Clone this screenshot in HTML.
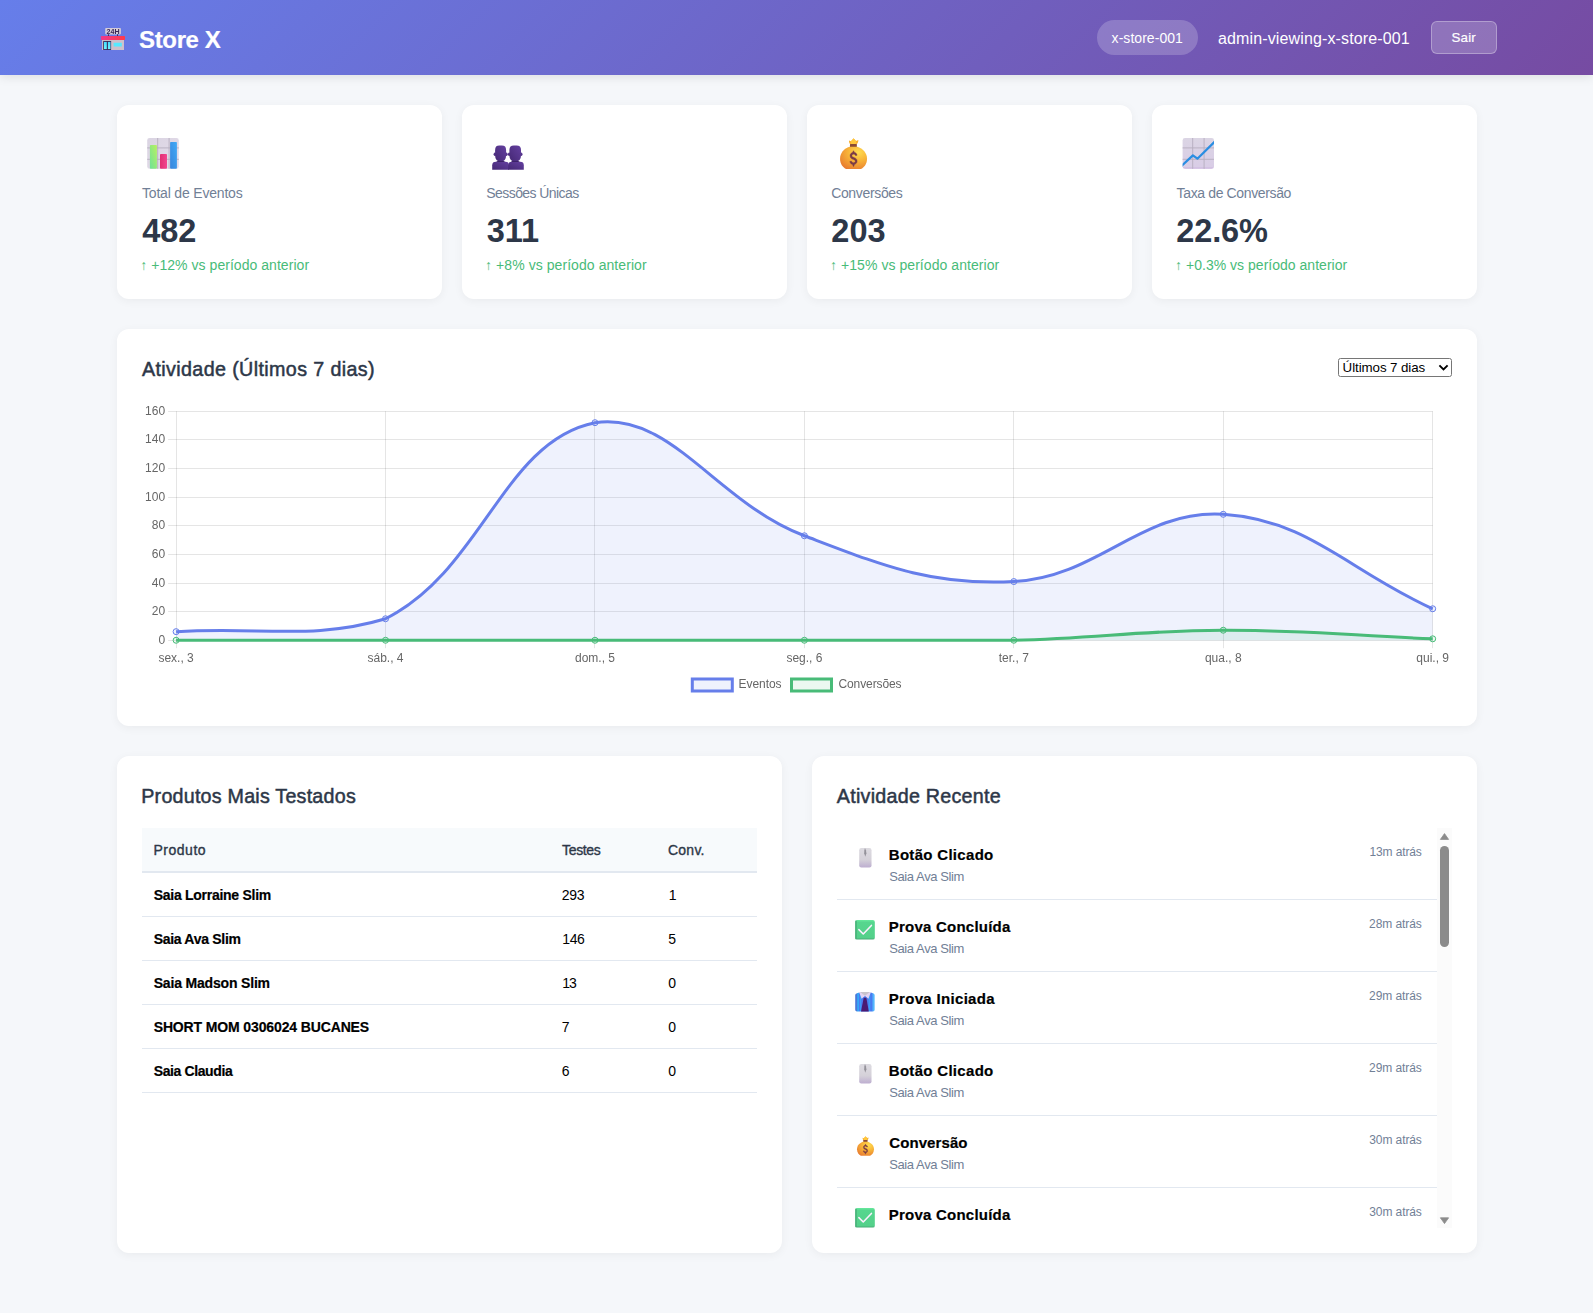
<!DOCTYPE html>
<html lang="pt-BR"><head><meta charset="utf-8"><title>Store X</title>
<style>
*{box-sizing:border-box;margin:0;padding:0}
html,body{width:1593px;height:1313px;overflow:hidden}
body{font-family:"Liberation Sans",sans-serif;background:#f5f7fa;color:#2d3748;position:relative}
.abs{position:absolute;white-space:nowrap;line-height:1}
.hdr{position:absolute;left:0;top:0;width:1593px;height:75px;background:linear-gradient(135deg,#667eea 0%,#764ba2 100%);box-shadow:0 2px 10px rgba(0,0,0,0.1)}
.pill{position:absolute;left:1097px;top:20px;width:101px;height:35px;border-radius:18px;background:rgba(255,255,255,0.2)}
.btn{position:absolute;left:1431px;top:21px;width:66px;height:33px;border-radius:6px;background:rgba(255,255,255,0.2);border:1px solid rgba(255,255,255,0.3)}
.card{position:absolute;background:#fff;border-radius:12px;box-shadow:0 2px 10px rgba(0,0,0,0.05)}
.stat{top:105px;width:325px;height:194px}
.sel{position:absolute;left:1338px;top:358px;width:114px;height:19px;border:1px solid #767676;border-radius:2.5px;background:#fff;color:#000;font-size:13.33px;line-height:17px;padding-left:3.6px;letter-spacing:-0.08px;white-space:nowrap}
.thbg{position:absolute;left:142px;top:828px;width:615px;height:45px;background:#f7fafc;border-bottom:2px solid #e2e8f0}
.rb{position:absolute;left:142px;width:615px;height:1px;background:#e2e8f0}
.ib{position:absolute;left:837px;width:600px;height:1px;background:#e2e8f0}
.sbt{position:absolute;left:1437px;top:828px;width:15px;height:400px;background:#fbfbfb}
.sbh{position:absolute;left:1440px;top:846px;width:9px;height:101px;border-radius:5px;background:#8b8b8b}

</style></head>
<body>
<div class="hdr">
  <div class="pill"></div>
  <div class="btn"></div>
</div>

<div class="card stat" style="left:117px"></div>
<div class="card stat" style="left:462px"></div>
<div class="card stat" style="left:807px"></div>
<div class="card stat" style="left:1152px"></div>

<div class="card" style="left:117px;top:329px;width:1360px;height:397px"></div>
<div class="sel">Últimos 7 dias<svg style="position:absolute;left:98.5px;top:5px" width="11" height="8" viewBox="0 0 11 8"><path d="M1.4 1.4 L5.5 5.4 L9.6 1.4" fill="none" stroke="#000" stroke-width="1.9"/></svg></div>
<svg class="chartsvg" width="1310" height="300" viewBox="142 400 1310 300" style="position:absolute;left:142px;top:400px;font-family:'Liberation Sans',sans-serif;will-change:transform">
<g stroke="#000" stroke-opacity="0.1" stroke-width="1" fill="none"><path d="M168.1 640.5H1432.7"/><path d="M168.1 611.5H1432.7"/><path d="M168.1 583.5H1432.7"/><path d="M168.1 554.5H1432.7"/><path d="M168.1 525.5H1432.7"/><path d="M168.1 497.5H1432.7"/><path d="M168.1 468.5H1432.7"/><path d="M168.1 439.5H1432.7"/><path d="M168.1 411.5H1432.7"/><path d="M176.5 411.2V648.2"/><path d="M385.5 411.2V648.2"/><path d="M594.5 411.2V648.2"/><path d="M804.5 411.2V648.2"/><path d="M1013.5 411.2V648.2"/><path d="M1223.5 411.2V648.2"/><path d="M1432.5 411.2V648.2"/></g>
<g fill="#666" font-size="12"><text x="165.1" y="643.8" text-anchor="end">0</text><text x="165.1" y="615.1" text-anchor="end">20</text><text x="165.1" y="586.5" text-anchor="end">40</text><text x="165.1" y="557.9" text-anchor="end">60</text><text x="165.1" y="529.2" text-anchor="end">80</text><text x="165.1" y="500.6" text-anchor="end">100</text><text x="165.1" y="472.0" text-anchor="end">120</text><text x="165.1" y="443.4" text-anchor="end">140</text><text x="165.1" y="414.8" text-anchor="end">160</text><text x="176.1" y="662.0" text-anchor="middle">sex., 3</text><text x="385.5" y="662.0" text-anchor="middle">sáb., 4</text><text x="595.0" y="662.0" text-anchor="middle">dom., 5</text><text x="804.4" y="662.0" text-anchor="middle">seg., 6</text><text x="1013.8" y="662.0" text-anchor="middle">ter., 7</text><text x="1223.3" y="662.0" text-anchor="middle">qua., 8</text><text x="1432.7" y="662.0" text-anchor="middle">qui., 9</text></g>
<path d="M176.10 631.66 C259.87 626.51 314.76 640.25 385.53 618.78 C482.30 570.50 503.39 440.85 594.97 422.70 C670.94 411.25 716.25 502.34 804.40 535.77 C883.80 565.88 931.14 585.81 1013.83 581.57 C1098.68 577.22 1141.32 508.98 1223.27 514.30 C1308.86 519.86 1348.93 570.98 1432.70 608.76 L1432.70 640.25 L176.10 640.25 Z" fill="rgba(102,126,234,0.1)"/>
<path d="M176.10 631.66 C259.87 626.51 314.76 640.25 385.53 618.78 C482.30 570.50 503.39 440.85 594.97 422.70 C670.94 411.25 716.25 502.34 804.40 535.77 C883.80 565.88 931.14 585.81 1013.83 581.57 C1098.68 577.22 1141.32 508.98 1223.27 514.30 C1308.86 519.86 1348.93 570.98 1432.70 608.76" fill="none" stroke="#667eea" stroke-width="3" stroke-linecap="butt" stroke-linejoin="miter"/>
<circle cx="176.10" cy="631.66" r="3" fill="rgba(102,126,234,0.1)" stroke="#667eea" stroke-width="1"/>
<circle cx="385.53" cy="618.78" r="3" fill="rgba(102,126,234,0.1)" stroke="#667eea" stroke-width="1"/>
<circle cx="594.97" cy="422.70" r="3" fill="rgba(102,126,234,0.1)" stroke="#667eea" stroke-width="1"/>
<circle cx="804.40" cy="535.77" r="3" fill="rgba(102,126,234,0.1)" stroke="#667eea" stroke-width="1"/>
<circle cx="1013.83" cy="581.57" r="3" fill="rgba(102,126,234,0.1)" stroke="#667eea" stroke-width="1"/>
<circle cx="1223.27" cy="514.30" r="3" fill="rgba(102,126,234,0.1)" stroke="#667eea" stroke-width="1"/>
<circle cx="1432.70" cy="608.76" r="3" fill="rgba(102,126,234,0.1)" stroke="#667eea" stroke-width="1"/>
<path d="M176.10 640.25 C259.87 640.25 301.76 640.25 385.53 640.25 C469.31 640.25 511.19 640.25 594.97 640.25 C678.74 640.25 720.63 640.25 804.40 640.25 C888.17 640.25 930.11 640.25 1013.83 640.25 C1097.65 638.25 1139.48 630.52 1223.27 630.23 C1307.03 629.95 1348.93 635.38 1432.70 638.82 L1432.70 640.25 L176.10 640.25 Z" fill="rgba(72,187,120,0.1)"/>
<path d="M176.10 640.25 C259.87 640.25 301.76 640.25 385.53 640.25 C469.31 640.25 511.19 640.25 594.97 640.25 C678.74 640.25 720.63 640.25 804.40 640.25 C888.17 640.25 930.11 640.25 1013.83 640.25 C1097.65 638.25 1139.48 630.52 1223.27 630.23 C1307.03 629.95 1348.93 635.38 1432.70 638.82" fill="none" stroke="#48bb78" stroke-width="3" stroke-linecap="butt" stroke-linejoin="miter"/>
<circle cx="176.10" cy="640.25" r="3" fill="rgba(72,187,120,0.1)" stroke="#48bb78" stroke-width="1"/>
<circle cx="385.53" cy="640.25" r="3" fill="rgba(72,187,120,0.1)" stroke="#48bb78" stroke-width="1"/>
<circle cx="594.97" cy="640.25" r="3" fill="rgba(72,187,120,0.1)" stroke="#48bb78" stroke-width="1"/>
<circle cx="804.40" cy="640.25" r="3" fill="rgba(72,187,120,0.1)" stroke="#48bb78" stroke-width="1"/>
<circle cx="1013.83" cy="640.25" r="3" fill="rgba(72,187,120,0.1)" stroke="#48bb78" stroke-width="1"/>
<circle cx="1223.27" cy="630.23" r="3" fill="rgba(72,187,120,0.1)" stroke="#48bb78" stroke-width="1"/>
<circle cx="1432.70" cy="638.82" r="3" fill="rgba(72,187,120,0.1)" stroke="#48bb78" stroke-width="1"/>
<rect x="692.3" y="679" width="40" height="12" fill="rgba(102,126,234,0.1)" stroke="#667eea" stroke-width="3"/>
<text x="738.6" y="688" fill="#666" font-size="12" textLength="42.9" lengthAdjust="spacing">Eventos</text>
<rect x="791.5" y="679" width="40" height="12" fill="rgba(72,187,120,0.1)" stroke="#48bb78" stroke-width="3"/>
<text x="838.4" y="688" fill="#666" font-size="12" textLength="63.2" lengthAdjust="spacing">Conversões</text>
</svg>

<div class="card" style="left:117px;top:756px;width:665px;height:497px"></div>
<div class="thbg"></div>
<div class="rb" style="top:916px"></div><div class="rb" style="top:960px"></div><div class="rb" style="top:1004px"></div><div class="rb" style="top:1048px"></div><div class="rb" style="top:1092px"></div>

<div class="card" style="left:812px;top:756px;width:665px;height:497px"></div>
<div class="ib" style="top:899px"></div><div class="ib" style="top:971px"></div><div class="ib" style="top:1043px"></div><div class="ib" style="top:1115px"></div><div class="ib" style="top:1187px"></div>
<div class="sbt"></div>
<div class="sbh"></div>
<svg style="position:absolute;left:1437px;top:828px" width="15" height="400" viewBox="0 0 15 400"><path d="M3.4 11.4 L7.5 5.6 L11.6 11.4 Z" fill="#8b8b8b" stroke="#8b8b8b" stroke-width="0.8" stroke-linejoin="round"/><path d="M3.4 389.8 L7.5 395.6 L11.6 389.8 Z" fill="#8b8b8b" stroke="#8b8b8b" stroke-width="0.8" stroke-linejoin="round"/></svg>
<div class="abs logo" style="left:139.12px;top:28.01px;font-size:24px;color:#fff;letter-spacing:-0.378px;font-weight:bold;-webkit-text-stroke:0.2px #fff;">Store X</div>
<div class="abs pillt" style="left:1111.60px;top:31.01px;font-size:14px;color:#fff;letter-spacing:0.046px;">x-store-001</div>
<div class="abs user" style="left:1218.00px;top:31.00px;font-size:16px;color:#fff;letter-spacing:0.131px;">admin-viewing-x-store-001</div>
<div class="abs btnt" style="left:1451.58px;top:31.00px;font-size:13.33px;color:#fff;letter-spacing:0.126px;-webkit-text-stroke:0.2px #fff;">Sair</div>
<div class="abs lbl" style="left:141.98px;top:186.01px;font-size:14px;color:#718096;letter-spacing:-0.184px;">Total de Eventos</div>
<div class="abs lbl" style="left:486.36px;top:186.01px;font-size:14px;color:#718096;letter-spacing:-0.585px;">Sessões Únicas</div>
<div class="abs lbl" style="left:831.14px;top:186.01px;font-size:14px;color:#718096;letter-spacing:-0.334px;">Conversões</div>
<div class="abs lbl" style="left:1176.58px;top:186.01px;font-size:14px;color:#718096;letter-spacing:-0.365px;">Taxa de Conversão</div>
<div class="abs val" style="left:142.30px;top:215.01px;font-size:32.5px;color:#2d3748;letter-spacing:-0.158px;font-weight:bold;">482</div>
<div class="abs val" style="left:486.79px;top:215.01px;font-size:32.5px;color:#2d3748;letter-spacing:-0.057px;font-weight:bold;">311</div>
<div class="abs val" style="left:831.28px;top:215.01px;font-size:32.5px;color:#2d3748;letter-spacing:0.050px;font-weight:bold;">203</div>
<div class="abs val" style="left:1176.28px;top:215.01px;font-size:32.5px;color:#2d3748;letter-spacing:-0.119px;font-weight:bold;">22.6%</div>
<div class="abs chg" style="left:140.25px;top:258.01px;font-size:14px;color:#48bb78;letter-spacing:0.044px;">↑ +12% vs período anterior</div>
<div class="abs chg" style="left:485.05px;top:258.01px;font-size:14px;color:#48bb78;letter-spacing:0.067px;">↑ +8% vs período anterior</div>
<div class="abs chg" style="left:830.05px;top:258.01px;font-size:14px;color:#48bb78;letter-spacing:0.056px;">↑ +15% vs período anterior</div>
<div class="abs chg" style="left:1175.05px;top:258.01px;font-size:14px;color:#48bb78;letter-spacing:0.020px;">↑ +0.3% vs período anterior</div>
<div class="abs h3" style="left:141.90px;top:360.01px;font-size:19.7px;color:#2d3748;letter-spacing:0.379px;-webkit-text-stroke:0.49px #2d3748;">Atividade (Últimos 7 dias)</div>
<div class="abs h3" style="left:141.26px;top:787.01px;font-size:19.7px;color:#2d3748;letter-spacing:0.225px;-webkit-text-stroke:0.49px #2d3748;">Produtos Mais Testados</div>
<div class="abs h3" style="left:836.80px;top:787.01px;font-size:19.7px;color:#2d3748;letter-spacing:0.257px;-webkit-text-stroke:0.49px #2d3748;">Atividade Recente</div>
<div class="abs th" style="left:153.51px;top:843.01px;font-size:14px;color:#2d3748;letter-spacing:0.504px;-webkit-text-stroke:0.35px #2d3748;">Produto</div>
<div class="abs th" style="left:562.08px;top:843.01px;font-size:14px;color:#2d3748;letter-spacing:-0.361px;-webkit-text-stroke:0.35px #2d3748;">Testes</div>
<div class="abs th" style="left:668.04px;top:843.01px;font-size:14px;color:#2d3748;letter-spacing:0.222px;-webkit-text-stroke:0.35px #2d3748;">Conv.</div>
<div class="abs tdb" style="left:153.68px;top:888.00px;font-size:14px;color:#000;letter-spacing:-0.270px;font-weight:bold;-webkit-text-stroke:0.2px #000;">Saia Lorraine Slim</div>
<div class="abs td" style="left:561.74px;top:888.00px;font-size:14px;color:#000;letter-spacing:-0.267px;">293</div>
<div class="abs td" style="left:668.73px;top:888.00px;font-size:14px;color:#000;">1</div>
<div class="abs tdb" style="left:153.68px;top:932.00px;font-size:14px;color:#000;letter-spacing:-0.295px;font-weight:bold;-webkit-text-stroke:0.2px #000;">Saia Ava Slim</div>
<div class="abs td" style="left:562.33px;top:932.00px;font-size:14px;color:#000;letter-spacing:-0.458px;">146</div>
<div class="abs td" style="left:668.16px;top:932.00px;font-size:14px;color:#000;">5</div>
<div class="abs tdb" style="left:153.68px;top:976.00px;font-size:14px;color:#000;letter-spacing:-0.177px;font-weight:bold;-webkit-text-stroke:0.2px #000;">Saia Madson Slim</div>
<div class="abs td" style="left:562.33px;top:976.00px;font-size:14px;color:#000;letter-spacing:-1.030px;">13</div>
<div class="abs td" style="left:668.16px;top:976.00px;font-size:14px;color:#000;">0</div>
<div class="abs tdb" style="left:153.68px;top:1020.01px;font-size:14px;color:#000;letter-spacing:-0.130px;font-weight:bold;-webkit-text-stroke:0.2px #000;">SHORT MOM 0306024 BUCANES</div>
<div class="abs td" style="left:561.74px;top:1020.01px;font-size:14px;color:#000;">7</div>
<div class="abs td" style="left:668.16px;top:1020.01px;font-size:14px;color:#000;">0</div>
<div class="abs tdb" style="left:153.68px;top:1064.01px;font-size:14px;color:#000;letter-spacing:-0.384px;font-weight:bold;-webkit-text-stroke:0.2px #000;">Saia Claudia</div>
<div class="abs td" style="left:561.74px;top:1064.01px;font-size:14px;color:#000;">6</div>
<div class="abs td" style="left:668.16px;top:1064.01px;font-size:14px;color:#000;">0</div>
<div class="abs tt" style="left:888.76px;top:847.00px;font-size:15px;color:#000;letter-spacing:0.307px;font-weight:bold;-webkit-text-stroke:0.2px #000;">Botão Clicado</div>
<div class="abs st" style="left:889.19px;top:870.00px;font-size:13px;color:#718096;letter-spacing:-0.400px;">Saia Ava Slim</div>
<div class="abs tm" style="left:1369.45px;top:846.02px;font-size:12px;color:#718096;letter-spacing:-0.116px;">13m atrás</div>
<div class="abs tt" style="left:888.76px;top:919.00px;font-size:15px;color:#000;letter-spacing:0.227px;font-weight:bold;-webkit-text-stroke:0.2px #000;">Prova Concluída</div>
<div class="abs st" style="left:889.19px;top:942.00px;font-size:13px;color:#718096;letter-spacing:-0.400px;">Saia Ava Slim</div>
<div class="abs tm" style="left:1369.04px;top:918.02px;font-size:12px;color:#718096;letter-spacing:-0.065px;">28m atrás</div>
<div class="abs tt" style="left:888.76px;top:991.00px;font-size:15px;color:#000;letter-spacing:0.318px;font-weight:bold;-webkit-text-stroke:0.2px #000;">Prova Iniciada</div>
<div class="abs st" style="left:889.19px;top:1014.00px;font-size:13px;color:#718096;letter-spacing:-0.400px;">Saia Ava Slim</div>
<div class="abs tm" style="left:1369.04px;top:990.02px;font-size:12px;color:#718096;letter-spacing:-0.065px;">29m atrás</div>
<div class="abs tt" style="left:888.76px;top:1063.00px;font-size:15px;color:#000;letter-spacing:0.307px;font-weight:bold;-webkit-text-stroke:0.2px #000;">Botão Clicado</div>
<div class="abs st" style="left:889.19px;top:1086.00px;font-size:13px;color:#718096;letter-spacing:-0.400px;">Saia Ava Slim</div>
<div class="abs tm" style="left:1369.04px;top:1062.02px;font-size:12px;color:#718096;letter-spacing:-0.065px;">29m atrás</div>
<div class="abs tt" style="left:889.23px;top:1135.00px;font-size:15px;color:#000;letter-spacing:0.092px;font-weight:bold;-webkit-text-stroke:0.2px #000;">Conversão</div>
<div class="abs st" style="left:889.19px;top:1158.00px;font-size:13px;color:#718096;letter-spacing:-0.400px;">Saia Ava Slim</div>
<div class="abs tm" style="left:1369.22px;top:1134.02px;font-size:12px;color:#718096;letter-spacing:-0.088px;">30m atrás</div>
<div class="abs tt" style="left:888.76px;top:1207.00px;font-size:15px;color:#000;letter-spacing:0.227px;font-weight:bold;-webkit-text-stroke:0.2px #000;">Prova Concluída</div>
<div class="abs tm" style="left:1369.22px;top:1206.02px;font-size:12px;color:#718096;letter-spacing:-0.088px;">30m atrás</div>
<svg width="0" height="0" style="position:absolute">
  <defs>
    <linearGradient id="gRoof" x1="0" x2="1" y1="0" y2="0"><stop offset="0" stop-color="#f0388c"/><stop offset="1" stop-color="#ff3a48"/></linearGradient>
    <linearGradient id="gCy" x1="0" x2="0" y1="0" y2="1"><stop offset="0" stop-color="#45dcff"/><stop offset="1" stop-color="#6df6ff"/></linearGradient>
    <linearGradient id="gGreen" x1="0" x2="1" y1="1" y2="0"><stop offset="0" stop-color="#6ee298"/><stop offset="1" stop-color="#b8f060"/></linearGradient>
    <linearGradient id="gPink" x1="0" x2="1" y1="0" y2="0"><stop offset="0" stop-color="#e02f72"/><stop offset="1" stop-color="#f24690"/></linearGradient>
    <linearGradient id="gBlue" x1="0" x2="1" y1="1" y2="0"><stop offset="0" stop-color="#3a84dc"/><stop offset="1" stop-color="#40aaf6"/></linearGradient>
    <linearGradient id="gPanel" x1="0" x2="1" y1="0" y2="1"><stop offset="0" stop-color="#dad4e2"/><stop offset="1" stop-color="#e4dcea"/></linearGradient>
    <linearGradient id="gPanel2" x1="0" x2="0" y1="0" y2="1"><stop offset="0" stop-color="#dbd5e4"/><stop offset="0.93" stop-color="#d9cde6"/><stop offset="1" stop-color="#c8b0dc"/></linearGradient>
    <linearGradient id="gPurp" x1="0" x2="1" y1="1" y2="0"><stop offset="0" stop-color="#452874"/><stop offset="1" stop-color="#6440a0"/></linearGradient>
    <radialGradient id="gBag" cx="0.68" cy="0.25" r="0.85"><stop offset="0" stop-color="#ffdc50"/><stop offset="0.45" stop-color="#f8b438"/><stop offset="1" stop-color="#e87c30"/></radialGradient>
    <linearGradient id="gMouse" x1="0" x2="0" y1="0" y2="1"><stop offset="0" stop-color="#dddbe1"/><stop offset="0.6" stop-color="#d5d1d9"/><stop offset="1" stop-color="#bdaed0"/></linearGradient>
    <linearGradient id="gShirt" x1="0" x2="1" y1="0" y2="0">
      <stop offset="0" stop-color="#4a78d8"/><stop offset="0.09" stop-color="#4a78d8"/><stop offset="0.13" stop-color="#30acfc"/><stop offset="0.17" stop-color="#34a6fa"/><stop offset="0.22" stop-color="#4a7af0"/><stop offset="0.27" stop-color="#3c9ef8"/><stop offset="0.33" stop-color="#4a7cf0"/>
      <stop offset="0.66" stop-color="#4a7cf0"/><stop offset="0.74" stop-color="#3c9ef8"/><stop offset="0.8" stop-color="#4a7af0"/><stop offset="0.87" stop-color="#4a7af0"/><stop offset="0.91" stop-color="#52b6fc"/><stop offset="1" stop-color="#52b6fc"/>
    </linearGradient>
    <linearGradient id="gCheck" x1="0" x2="0" y1="0" y2="1"><stop offset="0" stop-color="#68ea9e"/><stop offset="0.12" stop-color="#56d68e"/><stop offset="0.9" stop-color="#54d08a"/><stop offset="1" stop-color="#46a874"/></linearGradient>
    <symbol id="bag" viewBox="0 0 32 32">
      <path d="M11.6 2.6 L13.6 3.4 L16.2 0.4 L18.6 3.2 L21 2.2 C21.2 4 20.2 5.4 19.4 6.6 L12.8 6.6 C12 5.4 11.2 4.2 11.6 2.6Z" fill="#f9b030"/>
      <path d="M13.4 3.4 L16.2 0.6 L18.8 3.2 L18.4 6.4 L13.8 6.4Z" fill="#ffc83c"/>
      <rect x="12.5" y="6.3" width="7" height="3" rx="0.6" fill="#8a4a32"/>
      <path d="M12.2 9 L19.8 9 C25.6 10.8 29.8 15.4 29.8 21 C29.8 26.4 26.6 30 23.6 31.5 L8.6 31.5 C5.6 30 2.5 26.4 2.5 21 C2.5 15.4 6.4 10.8 12.2 9Z" fill="url(#gBag)"/>
      <path d="M16.1 13.2 L17.3 15.2 C18.7 15.5 19.7 16.6 19.7 18 L17.9 18 C17.8 17.2 17.1 16.8 16.2 16.8 C15.2 16.8 14.5 17.4 14.5 18.3 C14.5 20.6 19.8 19.6 19.8 23.8 C19.8 25.5 18.8 26.7 17.3 27.1 L16.1 29.5 L14.9 27.1 C13.4 26.7 12.4 25.6 12.4 24 L14.2 24 C14.3 24.9 15 25.5 16.1 25.5 C17.2 25.5 17.9 24.9 17.9 24 C17.9 21.6 12.6 22.6 12.6 18.4 C12.6 16.8 13.5 15.6 14.9 15.2Z" fill="#7a3c46" stroke="#7a3c46" stroke-width="0.35" stroke-linejoin="round" transform="translate(0 -0.3)"/>
    </symbol>
    <symbol id="mouse" viewBox="0 0 14 21">
      <rect x="0.3" y="0.3" width="12.8" height="20.2" rx="2.2" fill="url(#gMouse)"/>
      <path d="M6.3 0.2 L7.3 2.6 L7.8 5.6 L6.6 9.4 L5.5 5.6 L5.7 2.6Z" fill="#94929a"/>
    </symbol>
    <symbol id="check" viewBox="0 0 21 21">
      <rect x="0.2" y="0.2" width="20.2" height="20.2" rx="2" fill="url(#gCheck)"/>
      <rect x="0.2" y="0.6" width="1.6" height="19.4" rx="0.8" fill="#46a874" opacity="0.8"/>
      <path d="M4 10.1 L8.5 14.6 L16.9 5.8" fill="none" stroke="#fdf0ff" stroke-width="1.6" stroke-linecap="round" stroke-linejoin="round"/>
    </symbol>
    <symbol id="tie" viewBox="0 0 21 21">
      <path d="M2 1.4 L4.4 0.6 L16.2 0.6 L18.6 1.4 Q20.2 1.8 20.2 3.4 L20.2 18.6 Q20.2 20.4 18.4 20.4 L2 20.4 Q0.2 20.4 0.2 18.6 L0.2 3.4 Q0.2 1.8 2 1.4Z" fill="url(#gShirt)"/>
      <path d="M4.2 0.1 L16.4 0.1 L13.8 7.2 L10.3 4.3 L6.8 7.2Z" fill="#e4d4f2"/>
      <path d="M5.2 0.2 L15.4 0.2 L10.3 4Z" fill="#c8c4cc"/>
      <path d="M9 6 L11.6 6 L12 8 L14.2 20.4 L6.2 20.4 L8.6 8Z" fill="#4a1a72"/>
    </symbol>
  </defs>
</svg>
<!-- store icon -->
<svg style="position:absolute;left:95px;top:20px;will-change:transform" width="40" height="40" viewBox="0 0 40 40">
  <rect x="10.2" y="8.1" width="15.7" height="6.3" rx="0.8" fill="#d4ccd8"/>
  <text x="18.05" y="13.6" font-family="Liberation Sans" font-weight="bold" font-size="6.6" text-anchor="middle" fill="#3a2858" textLength="13" lengthAdjust="spacingAndGlyphs">24H</text>
  <rect x="13" y="14.2" width="0.9" height="2" fill="#3a2858"/><rect x="22.1" y="14.2" width="0.9" height="2" fill="#3a2858"/>
  <rect x="7" y="19" width="22" height="11" fill="#c6bcc8"/>
  <rect x="16.2" y="19.8" width="12.8" height="10.2" fill="#cdc0cc"/>
  <rect x="5.9" y="16" width="24.1" height="3.9" rx="0.6" fill="url(#gRoof)"/>
  <rect x="8.2" y="21" width="7.9" height="9" rx="0.5" fill="#3a2858"/>
  <rect x="9" y="21.9" width="2.8" height="7.2" fill="url(#gCy)"/><rect x="12.9" y="21.9" width="2.6" height="7.2" fill="url(#gCy)"/>
  <rect x="18.6" y="22.8" width="8.2" height="3.7" rx="0.5" fill="#55eaff"/>
</svg>
<!-- bar chart icon -->
<svg style="position:absolute;left:140px;top:130px" width="50" height="50" viewBox="0 0 50 50">
  <rect x="7.2" y="8" width="31.6" height="30.8" rx="2.4" fill="url(#gPanel)"/>
  <g stroke="#b6aebe" stroke-width="0.9"><path d="M17.7 8V38.8M29.1 8V38.8M7.2 17.9H38.8M7.2 29.3H38.8"/></g>
  <rect x="9.9" y="15" width="7" height="23.8" rx="0.8" fill="url(#gGreen)"/>
  <rect x="20" y="24" width="7" height="14.8" rx="0.8" fill="url(#gPink)"/>
  <rect x="30.1" y="12" width="6.8" height="26.8" rx="0.8" fill="url(#gBlue)"/>
</svg>
<!-- busts icon -->
<svg style="position:absolute;left:485px;top:130px" width="50" height="50" viewBox="0 0 50 50">
  <g fill="url(#gPurp)">
    <ellipse cx="9.9" cy="24.2" rx="1.3" ry="1.7"/><ellipse cx="21.4" cy="24.2" rx="1.3" ry="1.7"/>
    <ellipse cx="24.2" cy="24.2" rx="1.3" ry="1.7"/><ellipse cx="36.2" cy="24.2" rx="1.3" ry="1.7"/>
    <path d="M7.2 39.8 L7.2 35.2 Q7.2 31.8 11 31.8 L20.4 31.8 Q24 31.8 24 35.2 L24 39.8Z"/>
    <path d="M23.2 39.8 L23.2 35.2 Q23.2 31.8 27 31.8 L35.2 31.8 Q38.8 31.8 38.8 35.2 L38.8 39.8Z"/>
    <path d="M10.1 20 Q10.1 15.6 14.3 15.6 L16.9 15.6 Q21.1 15.6 21.1 20 L21.1 25.4 Q21.1 31.4 15.6 31.4 Q10.1 31.4 10.1 25.4Z"/>
    <path d="M24.4 20 Q24.4 15.6 28.8 15.6 L31.6 15.6 Q36 15.6 36 20 L36 25.4 Q36 31.4 30.2 31.4 Q24.4 31.4 24.4 25.4Z"/>
  </g>
  <path d="M12.6 31 L18.6 31 L20.4 31.9 L11 31.9Z M27.2 31 L33.2 31 L35 31.9 L25.8 31.9Z" fill="#3c2268"/>
</svg>
<!-- money bag big -->
<svg style="position:absolute;left:830px;top:130px" width="50" height="50" viewBox="0 0 50 50"><use href="#bag" x="7.6" y="7.9" width="31.6" height="31.6"/></svg>
<!-- chart increasing -->
<svg style="position:absolute;left:1175px;top:130px" width="50" height="50" viewBox="0 0 50 50">
  <rect x="7.6" y="8" width="31.4" height="30.8" rx="2.4" fill="url(#gPanel2)"/>
  <g stroke="#b6aec0" stroke-width="0.9"><path d="M17.7 8V38.8M29.1 8V38.8M7.6 17.9H39M7.6 29.3H39"/></g>
  <clipPath id="cpI"><rect x="7.6" y="8" width="31.4" height="30.8" rx="2.4"/></clipPath><path d="M6 36.4 L17.9 25.4 L22.4 28.7 L40.6 10.8" fill="none" stroke="#2a8ee2" stroke-width="2.2" stroke-linecap="round" stroke-linejoin="round" clip-path="url(#cpI)"/>
</svg>
<!-- list icons -->
<svg style="position:absolute;left:845px;top:840px" width="40" height="40" viewBox="0 0 40 40"><use href="#mouse" x="13.9" y="7.5" width="13.5" height="20.8"/></svg>
<svg style="position:absolute;left:845px;top:910px" width="40" height="40" viewBox="0 0 40 40"><use href="#check" x="10" y="9.8" width="20.4" height="20.4"/></svg>
<svg style="position:absolute;left:845px;top:982px" width="40" height="40" viewBox="0 0 40 40"><use href="#tie" x="10" y="9.8" width="20.4" height="20.4"/></svg>
<svg style="position:absolute;left:845px;top:1056px" width="40" height="40" viewBox="0 0 40 40"><use href="#mouse" x="13.9" y="7.5" width="13.5" height="20.8"/></svg>
<svg style="position:absolute;left:845px;top:1126px" width="40" height="40" viewBox="0 0 40 40"><use href="#bag" x="10.45" y="10.1" width="19.9" height="19.9"/></svg>
<svg style="position:absolute;left:845px;top:1198px" width="40" height="32" viewBox="0 0 40 32"><use href="#check" x="10" y="9.8" width="20.4" height="20.4"/></svg>


</body></html>
